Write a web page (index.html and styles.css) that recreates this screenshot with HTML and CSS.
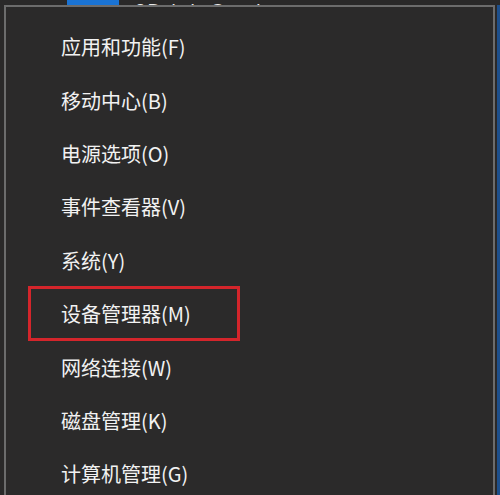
FILE: index.html
```html
<!DOCTYPE html>
<html lang="zh-CN">
<head>
<meta charset="utf-8">
<title>Win+X 菜单</title>
<link rel="stylesheet" href="styles.css">
</head>
<body>
<div class="topbar">
  <div class="tile"></div>
  <div class="peek">3DrightCaml</div>
</div>
<div class="row">
  <div class="menu">
    <div class="item">应用和功能(F)</div>
    <div class="item">移动中心(B)</div>
    <div class="item">电源选项(O)</div>
    <div class="item">事件查看器(V)</div>
    <div class="item">系统(Y)</div>
    <div class="item marked">设备管理器(M)<span class="frame"></span></div>
    <div class="item">网络连接(W)</div>
    <div class="item">磁盘管理(K)</div>
    <div class="item">计算机管理(G)</div>
  </div>
  <div class="edge"></div>
</div>
</body>
</html>
```
FILE: styles.css
```css
html, body {
  margin: 0;
  padding: 0;
  width: 500px;
  height: 495px;
  overflow: hidden;
  background: #2a2929;
  font-family: "Noto Sans CJK SC", "Noto Sans", sans-serif;
}
.topbar {
  height: 5px;
  overflow: hidden;
  display: flex;
  align-items: flex-start;
}
.tile {
  width: 52px;
  height: 5px;
  margin-left: 67px;
  background: #1a73d4;
  flex: none;
}
.peek {
  margin-left: 16px;
  margin-top: 1px;
  color: #e8e8e8;
  font-family: "Liberation Sans", sans-serif;
  font-size: 19px;
  line-height: 19px;
  letter-spacing: 2px;
  white-space: nowrap;
}
.row {
  display: flex;
  height: 490px;
}
.menu {
  margin-left: 4px;
  width: 491px;
  box-sizing: border-box;
  border-top: 2px solid #6c6c6c;
  border-left: 2px solid #6c6c6c;
  border-right: 2px solid #6c6c6c;
  background: #2b2a2a;
  padding-top: 13px;
  flex: none;
}
.item {
  position: relative;
  height: 53.4px;
  display: flex;
  align-items: center;
  padding-left: 55px;
  color: #f2f2f2;
  font-size: 20px;
  white-space: nowrap;
}
.frame {
  position: absolute;
  left: 22px;
  top: -1px;
  width: 212px;
  height: 55px;
  box-sizing: border-box;
  border: 3px solid #d4252b;
}
.edge {
  margin-left: 2px;
  flex: 1;
  background: #1d4f8c;
}
```
